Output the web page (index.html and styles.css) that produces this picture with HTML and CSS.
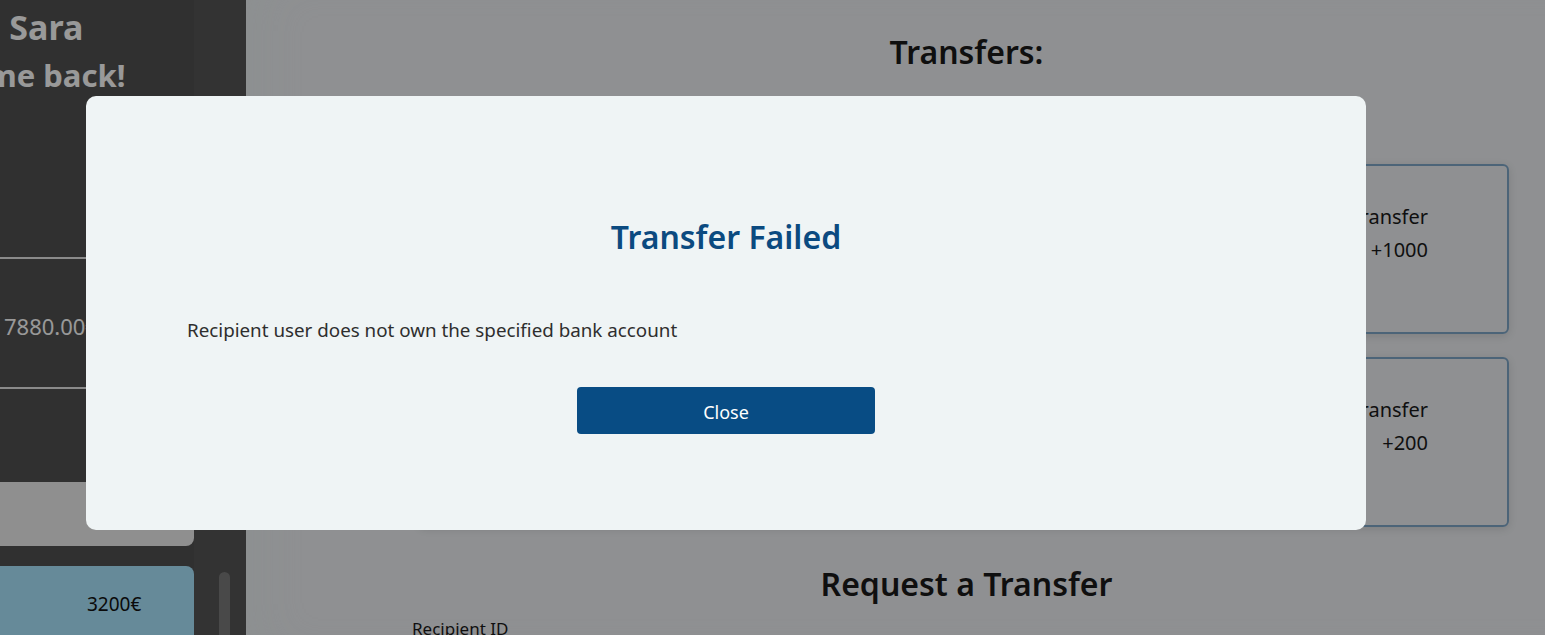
FILE: index.html
```html
<!DOCTYPE html>
<html lang="en">
<head>
<meta charset="utf-8">
<title>Transfers</title>
<link rel="stylesheet" href="styles.css">
</head>
<body>
<div class="app">
  <aside class="sidebar">
    <div class="side-view">
      <div class="side-inner">
        <h1 class="hello">Hello, Sara</h1>
        <h2 class="welcome">Welcome back!</h2>
        <div class="balance">
          <span class="balance-value">7880.00€</span>
        </div>
        <div class="account account-grey"></div>
        <div class="account account-blue"><span>3200€</span></div>
      </div>
    </div>
    <div class="scroll-track"><div class="scroll-thumb"></div></div>
  </aside>
  <main class="main">
    <h1 class="page-title">Transfers:</h1>
    <div class="cards">
      <div class="card">
        <div class="card-row">Incoming Transfer</div>
        <div class="card-row">+1000</div>
      </div>
      <div class="card">
        <div class="card-row">Incoming Transfer</div>
        <div class="card-row">+200</div>
      </div>
    </div>
    <h1 class="section-title">Request a Transfer</h1>
    <form class="request">
      <label class="field-label">Recipient ID</label>
    </form>
  </main>
</div>

<div class="overlay">
  <div class="modal">
    <h2 class="modal-title">Transfer Failed</h2>
    <p class="modal-text">Recipient user does not own the specified bank account</p>
    <div class="modal-actions">
      <button class="btn-close" type="button">Close</button>
    </div>
  </div>
</div>
</body>
</html>
```

FILE: styles.css
```css
* { box-sizing: border-box; }
html, body {
  margin: 0;
  height: 635px;
  overflow: hidden;
  font-family: "Segoe UI", "Noto Sans", "Open Sans", sans-serif;
}
.app {
  display: flex;
  height: 635px;
  overflow: hidden;
}
.sidebar {
  width: 246px;
  flex: none;
  background: #505050;
  display: flex;
  color: #ffffff;
}
.side-view {
  width: 194px;
  overflow: hidden;
}
.side-inner {
  width: 300px;
  margin-left: -106px;
  display: flex;
  flex-direction: column;
}
.hello {
  margin: 0 0 0 9px;
  padding-top: 6px;
  font-size: 34px;
  line-height: 42px;
  font-weight: 700;
  white-space: nowrap;
}
.welcome {
  margin: 7px 0 0;
  font-size: 31px;
  line-height: 40px;
  font-weight: 700;
  white-space: nowrap;
}
.balance {
  margin-top: 162px;
  border-top: 2px solid #e6e6e6;
  border-bottom: 2px solid #e6e6e6;
  height: 132px;
  display: flex;
  align-items: center;
  padding-left: 110px;
  padding-top: 6px;
  margin-right: -60px;
}
.balance-value {
  font-size: 22px;
  color: #ffffff;
}
.account {
  border-radius: 0 8px 8px 0;
}
.account-grey {
  margin-top: 93px;
  height: 64px;
  background: #eeeeee;
}
.account-blue {
  margin-top: 20px;
  height: 90px;
  background: #aae6ff;
  display: flex;
  align-items: center;
  padding-left: 193px;
  padding-bottom: 14px;
  font-size: 19px;
  color: #111;
}
.scroll-track {
  flex: 1;
  display: flex;
  justify-content: center;
  padding-top: 572px;
  padding-left: 9px;
  background: #555555;
}
.scroll-thumb {
  width: 11px;
  height: 100px;
  border-radius: 6px;
  background: #7b7b7b;
}
.main {
  flex: 1;
  background: #eef0f3;
  box-shadow: inset 40px 0 60px -40px rgba(230, 240, 240, 0.6);
  display: flex;
  flex-direction: column;
  align-items: center;
  padding-left: 142px;
  color: #1a1a1a;
}
.page-title {
  margin: 30px 0 0;
  font-size: 32px;
  line-height: 44px;
  font-weight: 600;
}
.cards {
  margin-top: 90px;
  width: 1090px;
  align-self: flex-end;
  margin-right: 36px;
  display: flex;
  flex-direction: column;
  gap: 23px;
}
.card {
  height: 170px;
  flex: none;
  border: 2px solid #7fa7c8;
  border-radius: 6px;
  box-shadow: 0 2px 8px rgba(0, 0, 0, 0.12);
  padding: 34px 79px 0 0;
  display: flex;
  flex-direction: column;
  align-items: flex-end;
  font-size: 20px;
  line-height: 33px;
}
.section-title {
  margin: 35px 0 0;
  font-size: 32px;
  line-height: 44px;
  font-weight: 600;
}
.request {
  align-self: stretch;
  padding-left: 24px;
  margin-top: 11px;
}
.field-label {
  font-size: 17px;
  line-height: 24px;
}
.overlay {
  position: fixed;
  inset: 0;
  background: rgba(0, 0, 0, 0.4);
  padding: 96px 0 0 86px;
}
.modal {
  width: 1280px;
  height: 434px;
  background: #eff4f5;
  border-radius: 10px;
  padding: 119px 101px 0;
  display: flex;
  flex-direction: column;
}
.modal-title {
  margin: 0;
  text-align: center;
  color: #0b4a80;
  font-size: 32px;
  line-height: 44px;
  font-weight: 600;
}
.modal-text {
  margin: 58px 0 0;
  font-size: 18.8px;
  line-height: 26px;
  color: #2e2e2e;
}
.modal-actions {
  margin-top: 44px;
  display: flex;
  justify-content: center;
}
.btn-close {
  width: 298px;
  height: 47px;
  border: none;
  border-radius: 4px;
  background: #084c84;
  color: #ffffff;
  font-family: inherit;
  font-size: 18px;
  padding-top: 4px;
}
```
